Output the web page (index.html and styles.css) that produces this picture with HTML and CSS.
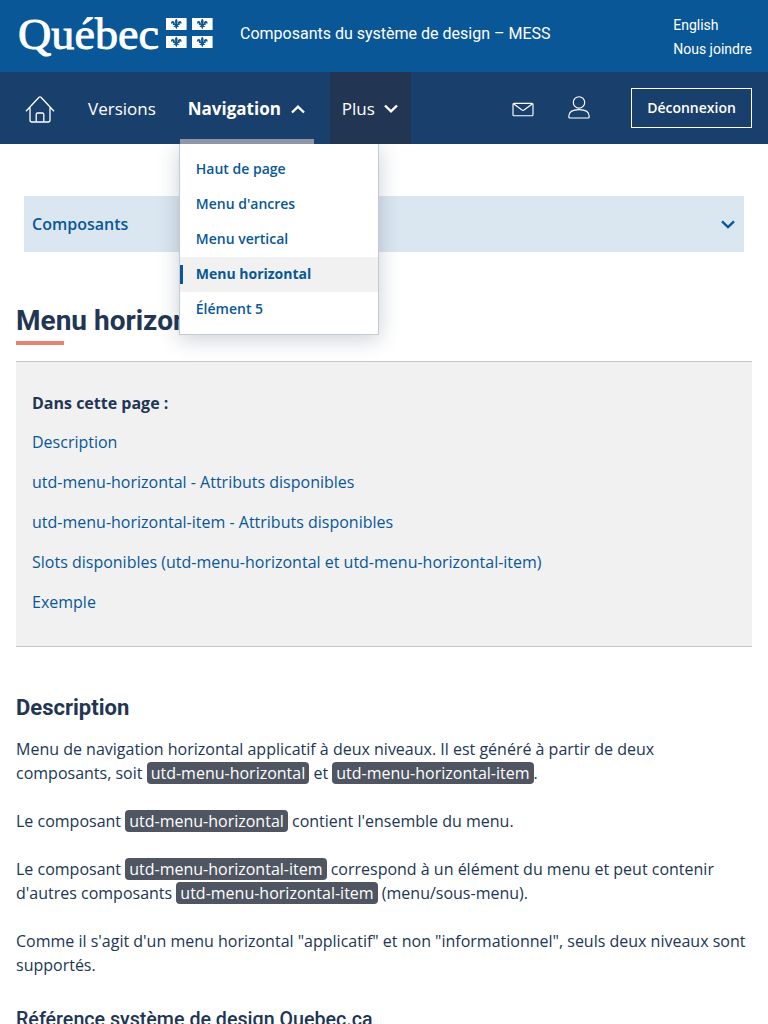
FILE: index.html
```html
<!DOCTYPE html>
<html lang="fr">
<head>
<meta charset="utf-8">
<title>Menu horizontal</title>
<link rel="stylesheet" href="styles.css">
</head>
<body>
<header class="banner">
  <svg class="logo" width="200" height="56" viewBox="0 -4 200 56" role="img" aria-label="Québec">
    <defs>
      <g id="flag">
        <rect width="20.6" height="12" fill="#fff"/>
        <path d="M10.3 .8C8.8 2.3 8.7 3.7 9.4 5.7H8.8C8.8 3.8 7.8 2.8 6.4 3C5 3.2 4.6 4.9 5.5 6.1C5.7 5.2 6.4 4.9 6.9 5.4C7.3 5.9 7 6.5 6.6 7H8.9C8.8 7.8 8.2 8.3 7.4 8.4C7.8 9.2 8.6 9.3 9.3 8.8C9.4 9.8 9.7 10.6 10.3 11.3C10.9 10.6 11.2 9.8 11.3 8.8C12 9.3 12.8 9.2 13.2 8.4C12.4 8.3 11.8 7.8 11.7 7H14C13.6 6.5 13.3 5.9 13.7 5.4C14.2 4.9 14.9 5.2 15.1 6.1C16 4.9 15.6 3.2 14.2 3C12.8 2.8 11.8 3.8 11.8 5.7H11.2C11.9 3.7 11.8 2.3 10.3 .8Z" fill="#095797"/>
      </g>
    </defs>
    <text class="wordmark" x="2" y="36.6" textLength="141" lengthAdjust="spacingAndGlyphs">Québec</text>
    <use href="#flag" x="150" y="6"/><use href="#flag" x="176" y="6"/>
    <use href="#flag" x="150" y="24"/><use href="#flag" x="176" y="24"/>
  </svg>
  <div class="site-title">Composants du système de design – MESS</div>
  <div class="banner-links"><a>English</a><a>Nous joindre</a></div>
</header>
<nav class="nav">
  <a class="home"><svg width="30" height="28" viewBox="0 0 30 28"><path d="M1 15.3 14 1.3Q15 .4 16 1.3L29 15.3M5 11.5V24Q5 26 7 26H23Q25 26 25 24V11.5M11.2 25.5V18.5Q11.2 17 12.7 17H17.3Q18.8 17 18.8 18.5V25.5"/></svg></a>
  <a class="nav-item versions">Versions</a>
  <div class="nav-item active">Navigation<svg class="chev" width="14" height="9" viewBox="0 0 14 9"><path d="M1 7.5 7 1.7 13 7.5"/></svg>
    <div class="menu">
      <a>Haut de page</a>
      <a>Menu d'ancres</a>
      <a>Menu vertical</a>
      <a class="current">Menu horizontal</a>
      <a>Élément 5</a>
    </div>
  </div>
  <div class="nav-item plus">Plus<svg class="chev" width="14" height="9" viewBox="0 0 14 9"><path d="M1 1.5 7 7.3 13 1.5"/></svg></div>
  <div class="actions">
    <svg class="mail" width="22" height="15" viewBox="0 0 22 15"><rect x="1" y="1.3" width="20" height="12.4" rx="1"/><path d="M1.5 1.8 10 8Q11 8.7 12 8L20.5 1.8"/></svg>
    <svg class="user" width="22" height="23" viewBox="0 0 22 23"><circle cx="11" cy="6.4" r="5.7"/><path d="M.8 20.5C.8 16 5 13.6 11 13.6S21.2 16 21.2 20.5V21Q21.2 22 20 22H2Q.8 22 .8 21Z"/></svg>
    <button class="logout">Déconnexion</button>
  </div>
</nav>
<div class="section-bar"><span>Composants</span><svg class="chev" width="14" height="9" viewBox="0 0 14 9"><path d="M1 1.3 7 7 13 1.3"/></svg></div>
<main class="content">
  <h1>Menu horizontal</h1>
  <section class="toc">
    <h2>Dans cette page :</h2>
    <a>Description</a>
    <a>utd-menu-horizontal - Attributs disponibles</a>
    <a>utd-menu-horizontal-item - Attributs disponibles</a>
    <a>Slots disponibles (utd-menu-horizontal et utd-menu-horizontal-item)</a>
    <a>Exemple</a>
  </section>
  <h2 class="title">Description</h2>
  <p>Menu de navigation horizontal applicatif à deux niveaux. Il est généré à partir de deux<br>composants, soit <code>utd-menu-horizontal</code> et <code>utd-menu-horizontal-item</code>.</p>
  <p>Le composant <code>utd-menu-horizontal</code> contient l'ensemble du menu.</p>
  <p>Le composant <code>utd-menu-horizontal-item</code> correspond à un élément du menu et peut contenir<br>d'autres composants <code>utd-menu-horizontal-item</code> (menu/sous-menu).</p>
  <p>Comme il s'agit d'un menu horizontal "applicatif" et non "informationnel", seuls deux niveaux sont<br>supportés.</p>
  <h3>Référence système de design Quebec.ca</h3>
</main>
</body>
</html>
```
FILE: styles.css
```css
* { box-sizing: border-box; }
html, body { height: 1024px; overflow: hidden; }
body { margin: 0; background: #fff; color: #223654; font: 16px/24px "Open Sans", sans-serif; }
svg { display: block; flex: none; overflow: visible; }
.banner { height: 72px; background: #095797; color: #fff; display: flex; align-items: center; padding: 0 16px; font-family: Roboto, sans-serif; }
.wordmark { font: 45px "Liberation Serif", serif; fill: #fff; stroke: #fff; stroke-width: .9px; }
.site-title { margin-left: 24px; margin-top: -4px; font-size: 16px; }
.banner-links { margin-left: auto; display: flex; flex-direction: column; font-size: 14px; padding-top: 2px; }
.nav { height: 72px; background: #19406c; color: #fff; display: flex; align-items: stretch; padding: 0 16px 0 25px; }
.home { display: flex; align-items: center; padding-top: 3px; }
.home path { fill: none; stroke: #fff; stroke-width: 1.3px; }
.mail, .user { fill: none; stroke: #fff; stroke-width: 1.15px; }
.nav-item { display: flex; align-items: center; position: relative; font-size: 17px; padding-top: 2px; }
.versions { margin-left: 33px; }
.active { width: 134px; margin-left: 24px; padding-left: 8px; font-weight: 700; }
.active::after { content: ""; position: absolute; left: 0; right: 0; bottom: 0; height: 5px; background: #8f96a8; }
.chev { fill: none; stroke: currentColor; stroke-width: 2.4px; }
.active .chev { margin-left: 10px; }
.plus { width: 81px; margin-left: 16px; padding-left: 12px; background: #223654; }
.plus .chev { margin-left: 9px; margin-top: -2px; }
.menu { position: absolute; z-index: 2; left: -1px; top: 72px; width: 200px; height: 191px; padding: 8px 0 7px; display: flex; flex-direction: column; background: #fff; border: 1px solid #c5cad2; border-top: 0; color: #095797; font: 600 14px/33px "Open Sans", sans-serif; box-shadow: 0 4px 20px rgba(34,54,84,.24); clip-path: inset(0 -40px -40px -40px); }
.menu a { height: 35px; padding-left: 16px; }
.menu .current { position: relative; background: #f1f1f2; font-weight: 700; }
.current::before { content: ""; position: absolute; left: 0; top: 8px; width: 3px; height: 19px; background: #095797; }
.actions { margin-left: auto; display: flex; align-items: center; }
.mail { margin-right: 34px; margin-top: 3px; }
.user { margin-right: 41px; margin-top: -1px; }
.logout { width: 121px; height: 40px; padding: 0 0 2px; border: 1px solid #fff; background: transparent; color: #fff; font: 600 14px "Open Sans", sans-serif; }
.section-bar { margin: 52px 24px 0; height: 56px; padding: 0 9px 0 8px; display: flex; align-items: center; justify-content: space-between; background: #dae6f0; color: #095797; font-weight: 600; }
.content { padding: 0 16px; }
h1 { margin: 51px 0 16px; font: 700 28px/36px Roboto, sans-serif; }
h1::after { content: ""; display: block; width: 48px; height: 4px; margin-top: 2px; background: #e58271; }
.toc { height: 286px; padding: 29px 16px 0; background: #f1f1f2; border: solid #c5cad2; border-width: 1px 0; display: flex; flex-direction: column; }
.toc h2 { margin: 0 0 15px; font: 700 16px/24px "Open Sans", sans-serif; }
.toc a { color: #095797; margin-bottom: 16px; }
.title { margin: 47px 0 15px; font: 700 22px/28px Roboto, sans-serif; }
p { margin: 0 0 24px; }
code { padding: 0 4px; border-radius: 4px; background: #4f5662; color: #fff; font: inherit; }
h3 { margin: 31px 0 0; font: 500 19.65px/24px Roboto, sans-serif; }
```
